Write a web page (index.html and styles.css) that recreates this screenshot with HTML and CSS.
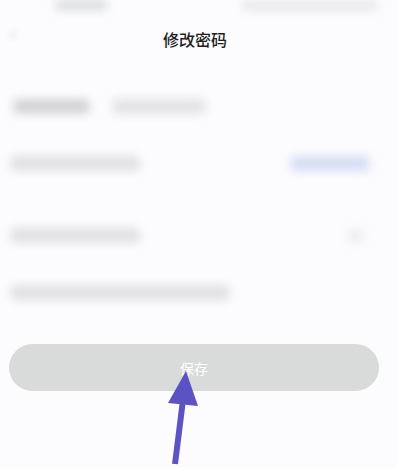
FILE: index.html
```html
<!DOCTYPE html>
<html lang="zh">
<head>
<meta charset="utf-8">
<link rel="stylesheet" href="styles.css">
</head>
<body>
<div class="screen">
  <div class="status">
    <div class="blob blob-left"></div>
    <div class="blob blob-right"></div>
  </div>
  <div class="nav">
    <div class="back"></div>
    <div class="title">修改密码</div>
  </div>
  <div class="row row1">
    <div class="bar b-dark w77"></div>
    <div class="bar b-light w94"></div>
  </div>
  <div class="row row2">
    <div class="bar b-mid w130"></div>
    <div class="bar b-blue w80"></div>
  </div>
  <div class="row row3">
    <div class="bar b-mid w130"></div>
    <div class="bar b-faint w16"></div>
  </div>
  <div class="row row4">
    <div class="bar b-mid w220"></div>
  </div>
  <div class="save">保存</div>
  <svg class="arrow" width="398" height="468" viewBox="0 0 398 468">
    <polygon points="186,371 168,403 198,406" fill="#5b52c4"/>
    <line x1="183" y1="400" x2="175" y2="464" stroke="#5b52c4" stroke-width="6"/>
  </svg>
</div>
</body>
</html>
```
FILE: styles.css
```css
html, body {
  margin: 0;
  padding: 0;
  background: #fcfcfe;
}
.screen {
  position: relative;
  width: 398px;
  height: 468px;
  overflow: hidden;
  font-family: "Noto Sans CJK SC", "Noto Sans", sans-serif;
}
.status {
  height: 14px;
  display: flex;
  justify-content: space-between;
  align-items: flex-start;
  padding: 0 20px 0 55px;
}
.blob {
  filter: blur(5px);
  border-radius: 4px;
}
.blob-left {
  width: 52px;
  height: 10px;
  background: #d8dbdd;
}
.blob-right {
  width: 136px;
  height: 11px;
  background: #e9e9eb;
}
.nav {
  height: 50px;
  display: flex;
  align-items: center;
  justify-content: center;
  position: relative;
}
.back {
  position: absolute;
  left: 10px;
  top: 16px;
  width: 6px;
  height: 10px;
  background: #f2f2f3;
  filter: blur(2px);
}
.title {
  font-size: 16px;
  font-weight: 500;
  color: #1e1e1e;
  line-height: 18px;
  margin-left: -8px;
}
.row {
  display: flex;
  height: 17px;
  align-items: center;
}
.bar {
  height: 15px;
  border-radius: 6px;
  filter: blur(5px);
}
.b-dark { background: #d3d3d5; }
.b-light { background: #e2e2e4; }
.b-mid { background: #e0e0e3; }
.b-blue { background: #d5ddf5; }
.b-faint { background: #eeeef0; }
.w77 { width: 77px; }
.w94 { width: 94px; }
.w130 { width: 130px; }
.w80 { width: 80px; }
.w16 { width: 16px; }
.w220 { width: 220px; }
.row1 {
  margin-top: 34px;
  padding-left: 13px;
  gap: 22px;
}
.row2 {
  margin-top: 40px;
  padding: 0 28px 0 10px;
  justify-content: space-between;
}
.row3 {
  margin-top: 55px;
  padding: 0 35px 0 10px;
  justify-content: space-between;
}
.row4 {
  margin-top: 40px;
  padding-left: 10px;
}
.save {
  margin: 43px 19px 0 9px;
  height: 47px;
  border-radius: 24px;
  background: #d9dbdb;
  color: #fff;
  font-size: 14px;
  display: flex;
  align-items: center;
  justify-content: center;
  box-sizing: border-box;
}
.arrow {
  position: absolute;
  left: 0;
  top: 0;
  pointer-events: none;
}
```
